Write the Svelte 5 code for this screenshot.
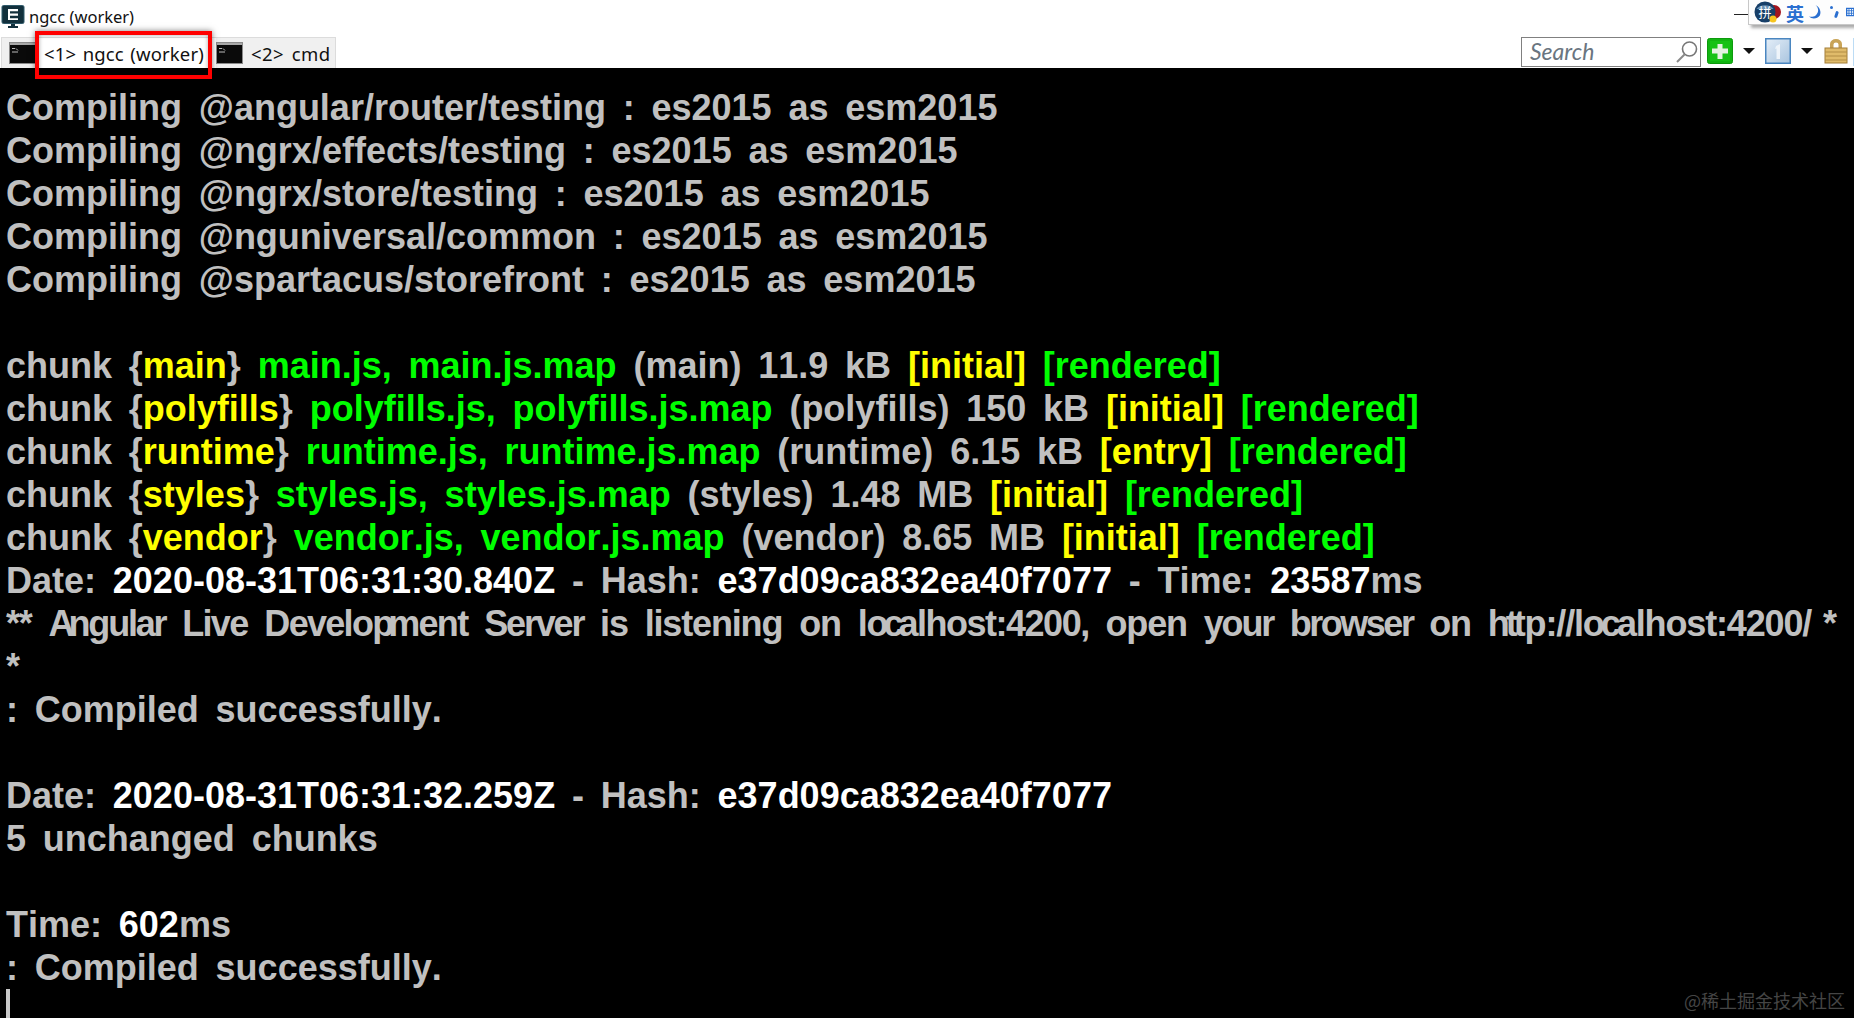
<script>
  const G = 'g', Y = 'y', W = 'w';
  const lines = [
    [['Compiling @angular/router/testing : es2015 as esm2015', 'd']],
    [['Compiling @ngrx/effects/testing : es2015 as esm2015', 'd']],
    [['Compiling @ngrx/store/testing : es2015 as esm2015', 'd']],
    [['Compiling @nguniversal/common : es2015 as esm2015', 'd']],
    [['Compiling @spartacus/storefront : es2015 as esm2015', 'd']],
    [],
    [['chunk {', 'd'], ['main', Y], ['} ', 'd'], ['main.js, main.js.map', G], [' (main) 11.9 kB ', 'd'], ['[initial]', Y], [' ', 'd'], ['[rendered]', G]],
    [['chunk {', 'd'], ['polyfills', Y], ['} ', 'd'], ['polyfills.js, polyfills.js.map', G], [' (polyfills) 150 kB ', 'd'], ['[initial]', Y], [' ', 'd'], ['[rendered]', G]],
    [['chunk {', 'd'], ['runtime', Y], ['} ', 'd'], ['runtime.js, runtime.js.map', G], [' (runtime) 6.15 kB ', 'd'], ['[entry]', Y], [' ', 'd'], ['[rendered]', G]],
    [['chunk {', 'd'], ['styles', Y], ['} ', 'd'], ['styles.js, styles.js.map', G], [' (styles) 1.48 MB ', 'd'], ['[initial]', Y], [' ', 'd'], ['[rendered]', G]],
    [['chunk {', 'd'], ['vendor', Y], ['} ', 'd'], ['vendor.js, vendor.js.map', G], [' (vendor) 8.65 MB ', 'd'], ['[initial]', Y], [' ', 'd'], ['[rendered]', G]],
    [['Date: ', 'd'], ['2020-08-31T06:31:30.840Z', W], [' - Hash: ', 'd'], ['e37d09ca832ea40f7077', W], [' - Time: ', 'd'], ['23587', W], ['ms', 'd']],
    [['** ', 'd'], ['A', 'x6'], ['ngular', 'n2'], [' ', 'd'], ['Live', 'n1'], [' ', 'd'], ['Develo', 'n1'], ['p', 'x6'], ['ment', 'n1'], [' ', 'd'], ['Server', 'n2'], [' is listening on ', 'd'], ['l', 'd'], ['oc', 'x5'], ['alhost:4200,', 'n0'], [' open ', 'd'], ['your', 'n2'], [' ', 'd'], ['browser', 'n3'], [' on ', 'd'], ['ht', 'x4'], ['tp://', 'd'], ['l', 'd'], ['oc', 'x4'], ['alhost:4200/', 'd'], [' ', 'gap'], ['*', 'd']],
    [['*', 'd']],
    [[': Compiled successfully.', 'd']],
    [],
    [['Date: ', 'd'], ['2020-08-31T06:31:32.259Z', W], [' - Hash: ', 'd'], ['e37d09ca832ea40f7077', W]],
    [['5 unchanged chunks', 'd']],
    [],
    [['Time: ', 'd'], ['602', W], ['ms', 'd']],
    [[': Compiled successfully.', 'd']]
  ];
  const LONG = 12;
</script>

{#snippet consoleIcon()}
  <svg class="con" width="27" height="22" viewBox="0 0 27 22">
    <rect x="0.500" y="0.500" width="26" height="21" fill="#0a0a0a" stroke="#8a8a8a"/>
    <rect x="1" y="1" width="25" height="2" fill="#a8a8a8"/>
    <path d="M3 6.500h3M7 6.500l2 2M3 10h6" stroke="#bbb" stroke-width="1"/>
  </svg>
{/snippet}

<div class="app">
  <header class="title">
    <svg class="appicon" width="24" height="24" viewBox="0 0 24 24">
      <rect x="1" y="0.500" width="22" height="18" rx="1.500" fill="#12303c" stroke="#2f5a6a"/>
      <path d="M7 4h10v2.200H9v2.400h8v2.200H9v2.400h8V15H7z" fill="#fff"/>
      <path d="M10 19h4v2h3v2H7v-2h3z" fill="#12303c"/>
    </svg>
    <span>ngcc (worker)</span>
    <span class="min"></span>
  </header>

  <div class="ime">
    <svg class="ball" width="28" height="22" viewBox="0 0 28 22">
      <circle cx="20" cy="11" r="7" fill="#a3141d"/>
      <circle cx="11" cy="11" r="10.500" fill="#173f68"/>
      <path d="M2.500 8a9.500 7 0 0 1 17 0z" fill="#6b93b5"/>
      <circle cx="19" cy="18" r="3.500" fill="#f7c51d"/>
      <text x="11" y="16" text-anchor="middle" font-size="13" fill="#fff" class="cjk">拼</text>
    </svg>
    <span class="ch">英</span>
    <svg width="16" height="18" viewBox="0 0 16 18"><path d="M9 1c4 3 4 9 0 12-3 2-6 2-8 1 4 4 10 3 13-1 2-4 0-10-5-12z" fill="#2a6fd0"/></svg>
    <span class="punct"><i></i><b></b></span>
    <svg width="10" height="12" viewBox="0 0 10 12"><rect x="0.750" y="1.750" width="8.500" height="8.500" fill="#fff" stroke="#2a6fd0" stroke-width="1.500"/><path d="M3.500 2v8M6.500 2v8M1 4.500h8M1 7.500h8" stroke="#2a6fd0"/></svg>
  </div>

  <nav class="bar">
    <div class="tabs">
      {@render consoleIcon()}
      <div class="tab active">&lt;1&gt; ngcc (worker)</div>
      {@render consoleIcon()}
      <div class="tab">&lt;2&gt; cmd</div>
    </div>
    <div class="tools">
      <div class="search">
        <span>Search</span>
        <svg width="24" height="24" viewBox="0 0 24 24"><circle cx="14.500" cy="9" r="7" fill="none" stroke="#777" stroke-width="1.600"/><path d="M9.500 14.500L2 22" stroke="#8a8a8a" stroke-width="2"/></svg>
      </div>
      <svg class="btn" width="26" height="26" viewBox="0 0 26 26"><rect x="0.500" y="0.500" width="25" height="25" rx="2" fill="#12b512" stroke="#0d9a0d"/><rect x="3" y="3" width="20" height="20" fill="#16c216"/><path d="M10.500 6h5v4.500H21v5h-5.500V21h-5v-5.500H5v-5h5.500z" fill="#e4f2e2"/></svg>
      <span class="caret"></span>
      <svg class="btn" width="26" height="26" viewBox="0 0 26 26"><defs><linearGradient id="one" x1="0" y1="0" x2="1" y2="1"><stop offset="0" stop-color="#e4eef8"/><stop offset="1" stop-color="#a9c4df"/></linearGradient></defs><rect x="0.750" y="0.750" width="24.500" height="24.500" fill="url(#one)" stroke="#4a86c0" stroke-width="1.500"/><path d="M11 8l4-2v15h-3.500V10.500L10 11z" fill="#eef4fa"/></svg>
      <span class="caret"></span>
      <svg class="lock" width="24" height="26" viewBox="0 0 24 26"><path d="M6 11V6a6 5 0 0 1 12 0v5h-3.500V6.500a2.500 2 0 0 0-5 0V11z" fill="#c9a457"/><rect x="1" y="10" width="22" height="15" fill="#e0bb6a" stroke="#a37e38"/><path d="M1 14h22M1 18h22M1 22h22" stroke="#b28d45"/></svg>
    </div>
    <span class="sliver"></span>
  </nav>

  <main class="term">
    {#each lines as line, i}
      <div class="line" class:long={i === LONG}>{#each line as [t, c]}<span class={c}>{t}</span>{/each}{#if line.length === 0}&nbsp;{/if}</div>
    {/each}
    <div class="cursor"></div>
  </main>

  <div class="mark">@稀土掘金技术社区</div>

  <div class="hl"></div>
</div>

<style>
  :global(body) { margin: 0; background: #000; overflow: hidden; }
  .app { width: 1854px; height: 1018px; position: relative; display: flex; flex-direction: column; overflow: hidden; font-family: "Liberation Sans", Arial, sans-serif; }
  .title { height: 34px; background: #fff; display: flex; align-items: flex-end; gap: 4px; font-family: "Noto Sans", "Open Sans", sans-serif; font-size: 16.500px; line-height: 30px; color: #111; padding: 0 0 5px 1px; box-sizing: border-box; }
  .title span { position: relative; top: 3px; }
  .appicon { flex: none; }
  .title .min { position: absolute; left: 1734px; top: 14px; width: 14px; height: 1px; background: #222; }
  .ime { position: absolute; left: 1748px; top: 0; width: 106px; height: 25px; padding: 0 0 0 5px; background: #fdfdfd; border: 1px solid #c8c8c8; border-top: 0; border-right: 0; box-shadow: 3px 3px 3px #aaa; display: flex; align-items: center; box-sizing: border-box; }
  .ball { flex: none; margin-right: 4px; }
  .ime .ch { font-family: "Noto Sans CJK SC", sans-serif; font-weight: 700; color: #2a6fd0; font-size: 18px; line-height: 22px; margin-right: 4px; margin-top: 2px; }
  .punct { width: 24px; height: 14px; position: relative; flex: none; }
  .punct i { position: absolute; left: 8px; top: 1px; width: 3px; height: 3px; border-radius: 50%; background: #2a6fd0; }
  .punct b { position: absolute; left: 13px; top: 6px; width: 3px; height: 7px; border-radius: 2px; background: #2a6fd0; transform: rotate(18deg); }
  .cjk { font-family: "Noto Sans CJK SC", sans-serif; }
  .bar { height: 34px; background: #fff; display: flex; justify-content: space-between; padding-left: 1px; padding-right: 6px; box-sizing: border-box; position: relative; }
  .tabs { display: flex; align-items: flex-start; height: 31px; background: #f0f0f0; border: 1px solid #dcdcdc; border-bottom: 0; margin-top: 3px; width: 335px; box-sizing: border-box; padding-left: 7px; }
  .con { flex: none; margin-top: 4px; }
  .tab { font-family: "Noto Sans", "Open Sans", sans-serif; font-size: 18.500px; color: #111; height: 31px; line-height: 31px; white-space: nowrap; padding-left: 8px; word-spacing: 2.500px; letter-spacing: 0.400px; }
  .tab.active { background: #fff; padding: 0 4px 0 8px; width: 180px; flex: none; box-sizing: border-box; word-spacing: 1.500px; letter-spacing: 0.150px; }
  .tools { display: flex; align-items: center; }
  .search { width: 180px; height: 30px; border: 1px solid #808080; box-sizing: border-box; display: flex; align-items: center; justify-content: space-between; padding: 0 1px 0 8px; font-family: "Lato", sans-serif; font-style: italic; font-size: 23px; line-height: 26px; color: #6a7580; background: #fff; margin-right: 6px; margin-top: 1px; }
  .search span { position: relative; top: -1px; }
  .btn { flex: none; }
  .caret { width: 0; height: 0; border: 6px solid transparent; border-top: 6px solid #111; border-bottom: 0; margin: 0 10px; }
  .lock { flex: none; margin-left: 1px; }
  .sliver { position: absolute; right: 0; top: 4px; width: 1px; height: 28px; background: #bcdcf5; }
  .term { flex: 1; background: #000; padding: 18px 0 0 6px; position: relative; }
  .line { height: 43px; line-height: 43px; font-size: 36px; font-weight: 700; white-space: pre; word-spacing: 6.800px; font-kerning: none; color: #c0c0c0; }
  .line.long { letter-spacing: -1.150px; word-spacing: 8px; }
  .d { color: #c0c0c0; }
  .x4, .x5, .x6, .n0, .n1, .n2, .n3, .gap { color: #c0c0c0; }
  .gap { word-spacing: 3px; }
  .x4 { letter-spacing: -4px; }
  .x5 { letter-spacing: -5px; }
  .x6 { letter-spacing: -6px; }
  .n0 { letter-spacing: -1.500px; }
  .n1 { letter-spacing: -1.700px; }
  .n2 { letter-spacing: -2.200px; }
  .n3 { letter-spacing: -2.500px; }
  .g { color: #00ff00; }
  .y { color: #ffff00; }
  .w { color: #ffffff; }
  .cursor { position: absolute; left: 6px; bottom: 0; width: 4px; height: 29px; background: #c8c8c8; }
  .mark { position: absolute; right: 9px; bottom: 5px; font-family: "Noto Sans CJK SC", sans-serif; font-size: 18px; line-height: 26px; color: #454545; }
  .hl { position: absolute; left: 35px; top: 31px; width: 177px; height: 48px; border: 4px solid #f00; box-sizing: border-box; box-shadow: 0 0 6px rgba(0,0,0,.5), inset 0 0 4px rgba(0,0,0,.35); }
</style>
